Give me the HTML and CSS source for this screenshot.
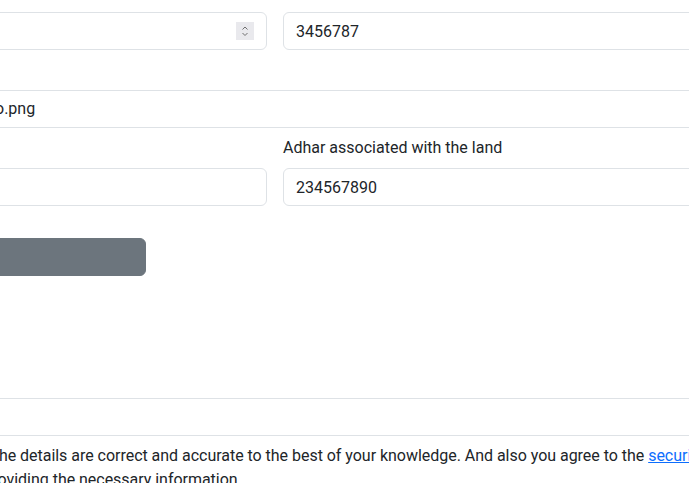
FILE: index.html
```html
<!DOCTYPE html>
<html lang="en">
<head>
<meta charset="utf-8">
<title>Land details</title>
<link rel="stylesheet" href="styles.css">
</head>
<body>
<form class="page">
  <div class="row">
    <div class="field">
      <label class="form-label">Area in acres</label>
      <div class="num-wrap">
        <input class="form-control num" type="text" value="12">
        <span class="spin"><svg width="18" height="18" viewBox="0 0 18 18"><path d="M6.5 7.5 L9 5 L11.5 7.5" fill="none" stroke="#6f6f6f" stroke-width="1"/><path d="M6.5 11 L9 13.5 L11.5 11" fill="none" stroke="#6f6f6f" stroke-width="1"/></svg></span>
      </div>
    </div>
    <div class="field">
      <label class="form-label">Khata number</label>
      <input class="form-control" type="text" value="3456787">
    </div>
  </div>

  <div class="field wide">
    <label class="form-label">Upload land record</label>
    <div class="form-control file">
      <span class="file-btn">Choose File</span>
      <span class="file-name">logo.png</span>
    </div>
  </div>

  <div class="row">
    <div class="field">
      <label class="form-label">Owner name</label>
      <input class="form-control" type="text" value="Ramesh">
    </div>
    <div class="field">
      <label class="form-label">Adhar associated with the land</label>
      <input class="form-control" type="text" value="234567890">
    </div>
  </div>

  <button type="button" class="btn-secondary">Verify</button>

  <div class="field wide remarks">
    <label class="form-label">Remarks</label>
    <input class="form-control" type="text" value="">
  </div>

  <p class="consent">By submitting, you confirm that all the details are correct and accurate to the best of your knowledge. And also you agree to the <a href="#">security policy</a><br>of the department for providing the necessary information.</p>
</form>
</body>
</html>
```

FILE: styles.css
```css
html, body {
  margin: 0;
  padding: 0;
  background: #fff;
  overflow: hidden;
}
body {
  font-family: Roboto, "Liberation Sans", sans-serif;
  font-size: 16px;
  line-height: 24px;
  color: #212529;
}
.page {
  width: 1050px;
  margin-left: -250px;
  margin-top: -20px;
  display: flex;
  flex-direction: column;
}
.row {
  display: grid;
  grid-template-columns: 1fr 1fr;
  column-gap: 16px;
  margin-bottom: 8px;
}
.field {
  display: flex;
  flex-direction: column;
}
.wide {
  margin-bottom: 8px;
}
.form-label {
  display: block;
  margin-bottom: 8px;
  line-height: 24px;
  white-space: nowrap;
}
.form-control {
  box-sizing: border-box;
  display: block;
  width: 100%;
  height: 38px;
  padding: 6px 12px;
  font: inherit;
  font-size: 16px;
  line-height: 24px;
  color: #212529;
  background: #fff;
  border: 1px solid #dee2e6;
  border-radius: 6px;
  outline: none;
}
.num-wrap {
  position: relative;
}
.spin {
  position: absolute;
  right: 13px;
  top: 10px;
  width: 18px;
  height: 18px;
  background: #e9e9ed;
  display: block;
}
.spin svg {
  display: block;
}
.file {
  display: flex;
  align-items: center;
  padding: 0;
  overflow: hidden;
}
.file-btn {
  box-sizing: border-box;
  width: 210px;
  height: 36px;
  line-height: 36px;
  padding: 0 12px;
  background: #f8f9fa;
  border-right: 1px solid #dee2e6;
  margin-right: 12px;
  flex: none;
}
.file-name {
  white-space: nowrap;
}
.btn-secondary {
  box-sizing: border-box;
  width: 396px;
  height: 38px;
  margin-top: 24px;
  padding: 6px 12px;
  font: inherit;
  color: #fff;
  background: #6c757d;
  border: 1px solid #6c757d;
  border-radius: 6px;
}
.remarks {
  margin-top: 90px;
}
.consent {
  margin: 0 0 16px 78px;
  text-indent: -79px;
  white-space: nowrap;
  letter-spacing: -0.03px;
}
.consent a {
  color: #0d6efd;
  text-decoration: underline;
}
```
